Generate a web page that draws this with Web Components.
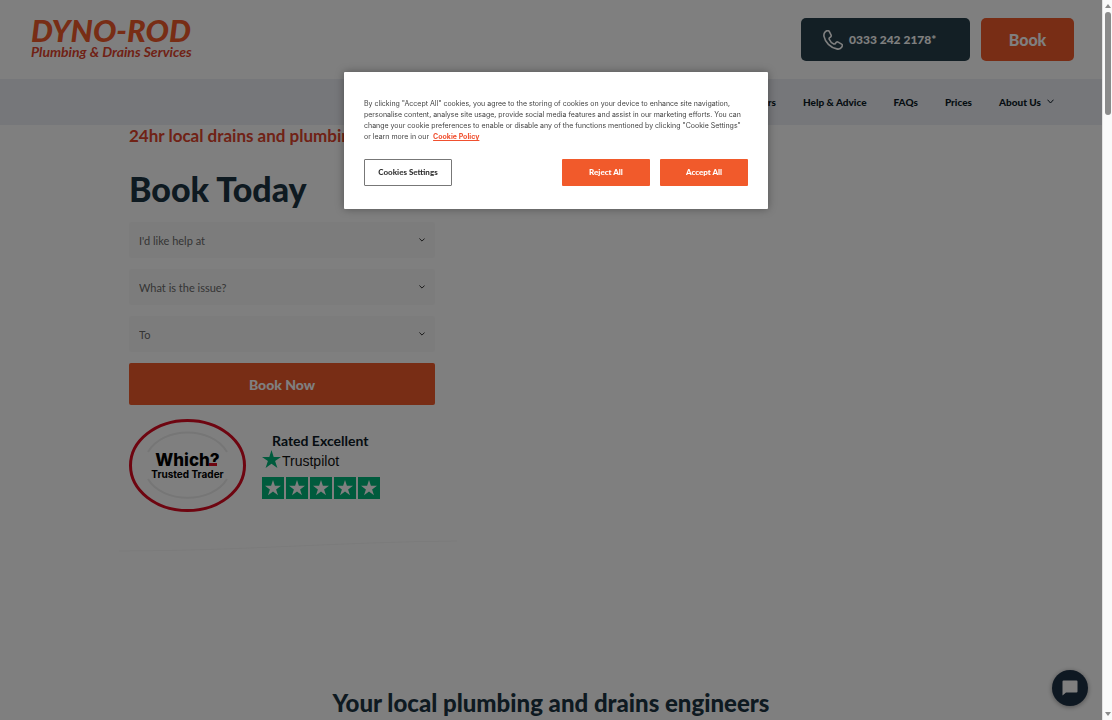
<!DOCTYPE html>
<html lang="en">
<head>
<meta charset="utf-8">
<meta name="viewport" content="width=device-width, initial-scale=1">
<title>Dyno-Rod | Plumbing &amp; Drains Services</title>
<style>
  :root { --orange: #f15a2b; --navy: #263f4b; --ink: #0c1a26; }
  * { box-sizing: border-box; }
  body { margin: 0; font-family: Lato, "Open Sans", sans-serif; color: var(--ink); background: #fff; }
</style>
</head>
<body>
<dyno-page>
  <site-header></site-header>
  <site-nav>
    <nav-item>Offers</nav-item>
    <nav-item>Help &amp; Advice</nav-item>
    <nav-item>FAQs</nav-item>
    <nav-item>Prices</nav-item>
    <nav-item menu>About Us</nav-item>
  </site-nav>
  <booking-hero>
    <booking-select label="I'd like help at" choices="Home,Business"></booking-select>
    <booking-select label="What is the issue?" choices="Blocked drain,Leak,Boiler"></booking-select>
    <booking-select label="To" choices="Repair,Install"></booking-select>
  </booking-hero>
  <section-title>Your local plumbing and drains engineers</section-title>
  <chat-button slot="float"></chat-button>
</dyno-page>
<cookie-dialog></cookie-dialog>

<script>
const define = (name, html, setup) => customElements.define(name, class extends HTMLElement {
  constructor() {
    super();
    const t = document.createElement('template');
    t.innerHTML = '<style>*{box-sizing:border-box}</style>' + html;
    this.attachShadow({ mode: 'open' }).append(t.content.cloneNode(true));
  }
  connectedCallback() { if (setup) setup(this, this.shadowRoot); }
});

define('dyno-page', `
<style>
  :host { display: grid; grid-template-columns: minmax(0, 1fr) 10px; height: 100vh; overflow: hidden; }
  .content { position: relative; overflow: hidden; height: 100vh; }
  .shade { position: absolute; inset: 0; background: rgba(0,0,0,.5); pointer-events: none; }
</style>
<div class="content"><slot></slot><slot name="float"></slot><div class="shade"></div></div>
<scroll-rail></scroll-rail>`);

define('scroll-rail', `
<style>
  :host { display: flex; flex-direction: column; align-items: center; background: #fafafa; border-left: 1px solid #e2e2e2; padding: 4px 0; gap: 4px; }
  .thumb { width: 6px; height: 103px; border-radius: 3px; background: #8b8b8b; }
  svg { display: block; width: 6px; height: 4px; fill: #8b8b8b; }
  .down { margin-top: auto; }
</style>
<svg viewBox="0 0 6 4"><path d="M3 0l3 4H0z"/></svg>
<div class="thumb"></div>
<svg class="down" viewBox="0 0 6 4"><path d="M0 0h6L3 4z"/></svg>`);

define('site-header', `
<style>
  :host { display: flex; align-items: flex-start; justify-content: space-between; height: 79px; padding: 18px 28px 0 31px; }
  .logo { color: var(--orange); text-decoration: none; font-style: italic; white-space: nowrap; }
  .name { display: block; font-size: 31px; line-height: 24px; font-weight: 900; }
  .tag { display: block; font-size: 14px; line-height: 20px; font-weight: 700; color: #e0442c; }
  .actions { display: flex; gap: 11px; }
  a.phone { display: flex; align-items: center; gap: 6px; width: 169px; height: 43px; padding-left: 22px; border-radius: 5px; background: var(--navy); color: #fff; font-size: 12px; font-weight: 900; text-decoration: none; }
  button { width: 93px; height: 43px; border: 0; border-radius: 5px; background: var(--orange); color: #fff; font: 900 16px Lato, sans-serif; }
  svg { width: 20px; height: 20px; fill: none; stroke: #fff; stroke-width: 1.6; stroke-linejoin: round; }
</style>
<a class="logo" href="#"><span class="name">DYNO-ROD</span><span class="tag">Plumbing &amp; Drains Services</span></a>
<div class="actions">
  <a class="phone" href="tel:03332422178"><svg viewBox="0 0 20 20"><path d="M2.2 1.8C3.5.6 5.1.3 6.1 1.2L8 4.8c.5 1 .2 1.8-.8 2.4-1 .5-1.4 1-1 2 .9 2.2 2.4 3.700 4.600 4.700 1 .4 1.600 0 2-1 .5-1 1.400-1.300 2.300-.8l3.500 2c1 .6 1 1.600.2 2.900-1 1.700-2.800 2.400-5 1.900C7.300 17.500 2.200 12.300 1 6.300.7 4.500.9 3 2.200 1.800z"/></svg><span>0333 242 2178*</span></a>
  <button type="button">Book</button>
</div>`);

define('site-nav', `
<style>
  :host { display: block; background: #eceef4; height: 46px; }
  nav { display: flex; justify-content: flex-end; align-items: center; gap: 27px; height: 45px; padding-right: 48px; }
</style>
<nav><slot></slot></nav>`);

define('nav-item', `
<style>
  :host { display: block; }
  a { display: flex; align-items: center; gap: 6px; color: var(--ink); text-decoration: none; font-size: 10px; line-height: 14px; font-weight: 900; white-space: nowrap; }
  svg { display: none; width: 7px; height: 5px; fill: none; stroke: currentColor; }
  :host([menu]) svg { display: block; }
</style>
<a href="#"><slot></slot><svg viewBox="0 0 7 5"><path d="M.5.7l3 3.300 3-3.300"/></svg></a>`);

define('booking-select', `
<style>
  :host { display: grid; height: 36px; align-items: center; }
  select, svg { grid-area: 1 / 1; }
  select { appearance: none; width: 100%; height: 36px; border: 0; border-radius: 2px; padding: 0 10px; background: #f9f9f9; color: #6a6a6a; font: 400 11px Lato, sans-serif; }
  svg { justify-self: end; margin-right: 10px; width: 6px; height: 4px; fill: none; stroke: #333; pointer-events: none; }
</style>
<select></select><svg viewBox="0 0 6 4"><path d="M.4.5L3 3.100 5.600.5"/></svg>`,
(host, root) => {
  const select = root.querySelector('select'), label = host.getAttribute('label');
  select.setAttribute('aria-label', label);
  select.add(new Option(label, ''));
  host.getAttribute('choices').split(',').forEach(c => select.add(new Option(c)));
});

define('booking-hero', `
<style>
  :host { display: block; padding-left: 129px; height: 559px; }
  .lead { margin: 0; font-size: 17px; line-height: 22px; font-weight: 700; color: #e0442c; }
  h1 { margin: 0; padding-top: 22px; font-size: 34px; line-height: 40px; font-weight: 900; color: #1c3443; }
  form { display: flex; flex-direction: column; gap: 11px; width: 306px; margin-top: 13px; }
  slot { display: contents; }
  button { height: 42px; border: 0; border-radius: 2px; background: var(--orange); color: #fff; font: 900 14px Lato, sans-serif; }
  .badges { display: flex; gap: 16px; margin-top: 14px; }
  .curve { display: block; width: 338px; height: 14px; margin: 26px 0 0 -10px; fill: none; stroke: #f6f6f6; }
</style>
<p class="lead">24hr local drains and plumbing</p>
<h1>Book Today</h1>
<form>
  <slot></slot>
  <button type="button">Book Now</button>
</form>
<div class="badges"><which-badge></which-badge><trust-rating></trust-rating></div>
<svg class="curve" viewBox="0 0 338 14"><path d="M0 13C120 13 220 4 338 3"/></svg>`);

define('which-badge', `
<style>
  :host { display: grid; width: 117px; height: 93px; place-items: center; }
  svg, .text { grid-area: 1 / 1; }
  svg { width: 117px; height: 93px; fill: none; }
  .text { text-align: center; color: #000; font-family: Inter, sans-serif; white-space: nowrap; }
  .which { display: block; font-size: 17px; line-height: 16px; font-weight: 800; }
  .trader { display: block; font-size: 10px; line-height: 12px; font-weight: 700; }
</style>
<svg viewBox="0 0 117 93">
  <ellipse cx="58.500" cy="46.500" rx="57" ry="45" stroke="#dc0a21" stroke-width="3"/>
  <path d="M19 33C34 7 83 7 98 33M19 60c15 25 64 25 79 0" stroke="#ececec" stroke-width="2"/>
</svg>
<div class="text"><span class="which">Which?</span><span class="trader">Trusted Trader</span></div>
<svg viewBox="0 0 117 93"><path d="M80 44h8v3h-8z" fill="#dc0a21"/></svg>`);

define('trust-rating', `
<style>
  :host { display: block; padding-top: 13px; }
  .rated { display: block; padding-left: 10px; font-size: 14px; line-height: 17px; font-weight: 700; }
  .brand { display: flex; align-items: center; gap: 1px; height: 20px; font: 400 14px/24px "Liberation Sans", sans-serif; color: #111; }
  .brand svg { width: 19px; height: 18px; fill: #00b67a; }
  .brand span { padding-top: 3px; }
  .stars { display: flex; gap: 2px; margin-top: 8px; }
  .stars svg { width: 22px; height: 22px; background: #00b67a; fill: #fff; }
</style>
<span class="rated">Rated Excellent</span>
<div class="brand"><svg viewBox="0 0 19 18"><path d="M9.500 0l2.200 6.900H19l-5.900 4.200 2.300 6.900-5.900-4.300L3.600 18l2.300-6.900L0 6.900h7.300z"/></svg><span>Trustpilot</span></div>
<div class="stars" role="img" aria-label="Five stars"></div>`,
(host, root) => {
  root.querySelector('.stars').innerHTML = '<svg viewBox="0 0 22 22"><path d="M11 3l1.900 5.800H19l-4.900 3.600 1.900 5.800-5-3.600-5 3.600 1.900-5.800L3 8.800h6.100z"/></svg>'.repeat(5);
});

define('section-title', `
<style>
  :host { display: block; text-align: center; }
  h2 { margin: 0; font-size: 24px; line-height: 38px; font-weight: 900; color: #1c3443; }
</style>
<h2><slot></slot></h2>`);

define('chat-button', `
<style>
  :host { position: absolute; right: 14px; bottom: 14px; display: block; }
  button { display: grid; place-items: center; width: 36px; height: 36px; border: 0; padding: 0; border-radius: 50%; background: #1d3045; box-shadow: 0 1px 5px rgba(0,0,0,.4); }
  svg { width: 16px; height: 16px; fill: #fff; }
</style>
<button type="button" aria-label="Chat"><svg viewBox="0 0 16 16"><path d="M1.500.5h13q1 0 1 1v10q0 1-1 1H4L.5 15.500v-14q0-1 1-1z"/></svg></button>`);

define('cookie-dialog', `
<style>
  :host { position: fixed; top: 72px; left: 0; right: 0; margin: 0 auto; width: 424px; display: block; padding: 26px 20px 23px; background: #fff; box-shadow: 0 0 9px rgba(0,0,0,.35); border-radius: 1px; }
  p { margin: 0; font: 400 7px/11px Inter, sans-serif; color: #444; white-space: nowrap; }
  a { color: #f0502f; font-weight: 700; margin-left: 2px; }
  .row { display: flex; gap: 10px; margin-top: 17px; }
  button { width: 88px; height: 27px; padding: 0 0 2px; border: 0; border-radius: 1px; background: var(--orange); color: #fff; font: 900 8px Lato, sans-serif; }
  .settings { margin-right: auto; background: #fff; color: #333; border: 1px solid #777; }
</style>
<div role="dialog" aria-label="Cookies">
<p>By clicking "Accept All" cookies, you agree to the storing of cookies on your device to enhance site navigation,<br>personalise content, analyse site usage, provide social media features and assist in our marketing efforts. You can<br>change your cookie preferences to enable or disable any of the functions mentioned by clicking "Cookie Settings"<br>or learn more in our <a href="#">Cookie Policy</a></p>
<div class="row">
  <button class="settings" type="button">Cookies Settings</button>
  <button type="button">Reject All</button>
  <button type="button">Accept All</button>
</div>
</div>`);
</script>
</body>
</html>
